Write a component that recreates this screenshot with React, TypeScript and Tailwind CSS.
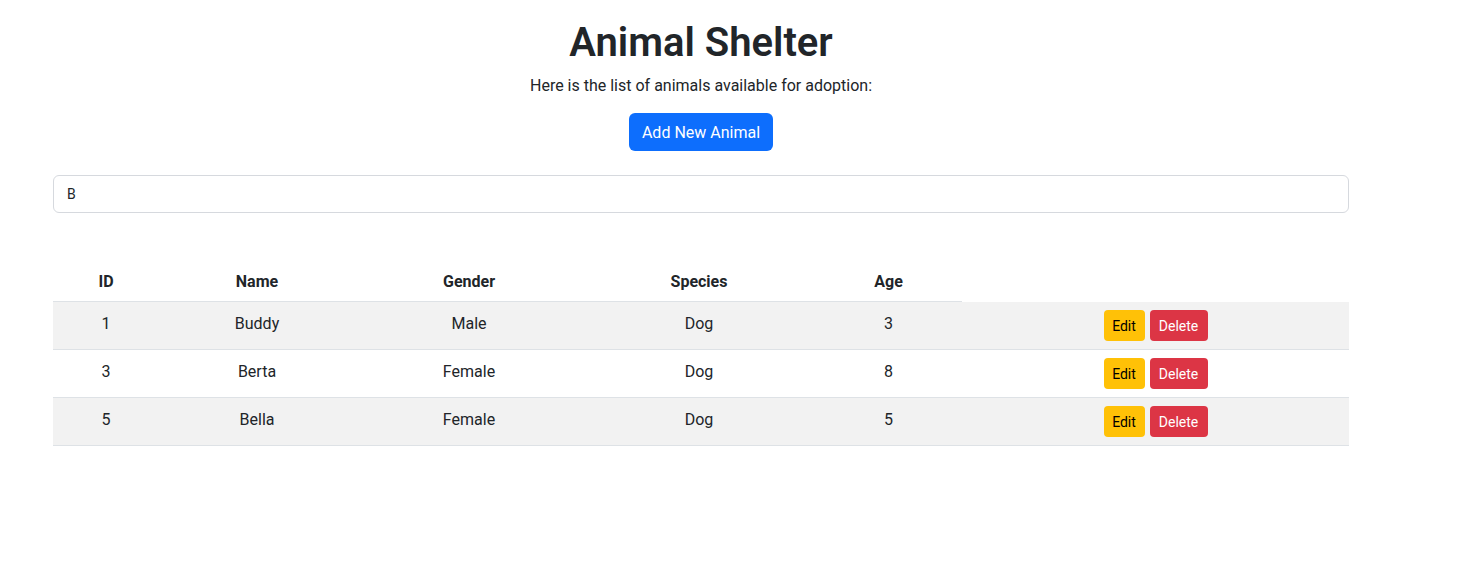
const animals = [
  { id: 1, name: 'Buddy', gender: 'Male', species: 'Dog', age: 3 },
  { id: 3, name: 'Berta', gender: 'Female', species: 'Dog', age: 8 },
  { id: 5, name: 'Bella', gender: 'Female', species: 'Dog', age: 5 },
];

export default function App() {
  const td = 'px-2 pt-[10px] pb-[6px] align-top';
  const th = 'px-2 pt-[9px] pb-[7px] font-bold border-b border-[#dee2e6]';
  return (
    <div
      className="min-h-[587px] bg-white text-[#212529]"
      style={{ fontFamily: 'Roboto, "Liberation Sans", sans-serif' }}
    >
      <div className="ml-[53px] w-[1296px] pt-[19px]">
        <h1 className="text-center text-[40px] leading-[48px] font-semibold mb-[7px]">Animal Shelter</h1>
        <p className="text-center text-[16px] leading-6 mb-[15px]">
          Here is the list of animals available for adoption:
        </p>
        <div className="flex justify-center">
          <button className="h-[38px] w-[144px] rounded-[6px] bg-[#0d6efd] text-white text-[16px] leading-6 pt-px">
            Add New Animal
          </button>
        </div>
        <div className="mt-6 h-[38px] w-full rounded-[6px] border border-[#d6d9de] flex items-center px-[13px] text-[14px]">
          B
        </div>
        <table className="mt-12 w-full border-collapse text-[16px] leading-6 text-center">
          <thead>
            <tr>
              <th className={`w-[106px] ${th}`}>ID</th>
              <th className={`w-[196px] ${th}`}>Name</th>
              <th className={`w-[228px] ${th}`}>Gender</th>
              <th className={`w-[232px] ${th}`}>Species</th>
              <th className={`w-[147px] ${th}`}>Age</th>
            </tr>
          </thead>
          <tbody>
            {animals.map((a, i) => (
              <tr key={a.id} className={`border-b border-[#dee2e6] ${i % 2 === 0 ? 'bg-[#f2f2f2]' : 'bg-white'}`}>
                <td className={td}>{a.id}</td>
                <td className={td}>{a.name}</td>
                <td className={td}>{a.gender}</td>
                <td className={td}>{a.species}</td>
                <td className={td}>{a.age}</td>
                <td className="p-2 align-top">
                  <div className="flex justify-center gap-[5px]">
                    <button className="h-[31px] w-[41px] rounded-[4px] bg-[#ffc107] text-black text-[14px] pt-px">Edit</button>
                    <button className="h-[31px] w-[58px] rounded-[4px] bg-[#dc3545] text-white text-[14px] pt-px">Delete</button>
                  </div>
                </td>
              </tr>
            ))}
          </tbody>
        </table>
      </div>
    </div>
  );
}
